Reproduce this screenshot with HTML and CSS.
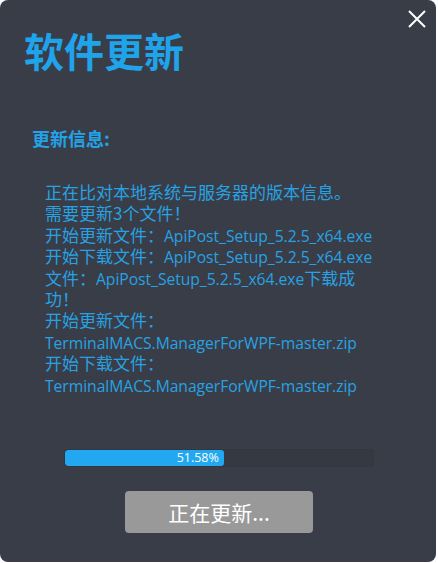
FILE: index.html
```html
<!DOCTYPE html>
<html lang="zh-CN">
<head>
<meta charset="utf-8">
<link rel="stylesheet" href="styles.css">
</head>
<body>
<div class="window">
  <button class="close" aria-label="关闭">
    <svg width="20" height="20" viewBox="0 0 20 20"><path d="M2 2 L18 18 M18 2 L2 18" stroke="#ffffff" stroke-width="2" fill="none"/></svg>
  </button>
  <h1 class="title">软件更新</h1>
  <h2 class="subtitle">更新信息:</h2>
  <div class="log">
    <div class="line">正在比对本地系统与服务器的版本信息。</div>
    <div class="line">需要更新3个文件！</div>
    <div class="line">开始更新文件：<span class="lat">ApiPost_Setup_5.2.5_x64.exe</span></div>
    <div class="line">开始下载文件：<span class="lat">ApiPost_Setup_5.2.5_x64.exe</span></div>
    <div class="line">文件：<span class="lat">ApiPost_Setup_5.2.5_x64.exe</span>下载成</div>
    <div class="line">功！</div>
    <div class="line">开始更新文件：</div>
    <div class="line"><span class="lat">TerminalMACS.ManagerForWPF-master.zip</span></div>
    <div class="line">开始下载文件：</div>
    <div class="line"><span class="lat">TerminalMACS.ManagerForWPF-master.zip</span></div>
  </div>
  <div class="progress">
    <div class="fill" style="width: 51.58%"><span class="pct">51.58%</span></div>
  </div>
  <div class="actions">
    <button class="update-btn">正在更新...</button>
  </div>
</div>
</body>
</html>
```
FILE: styles.css
```css
html, body {
  margin: 0;
  padding: 0;
  background: #ffffff;
}
body {
  font-family: "Noto Sans", "Noto Sans CJK SC", sans-serif;
}
.window {
  position: relative;
  width: 436px;
  height: 562px;
  background: #393d47;
  border-radius: 8px;
  overflow: hidden;
  display: flex;
  flex-direction: column;
}
.close {
  position: absolute;
  top: 8px;
  right: 8px;
  width: 22px;
  height: 22px;
  padding: 1px;
  border: 0;
  background: transparent;
  display: flex;
  align-items: center;
  justify-content: center;
}
.title {
  margin: 27px 0 0 24px;
  font-family: "Noto Sans CJK SC", sans-serif;
  font-size: 40px;
  line-height: 46px;
  font-weight: 700;
  color: #1fa3ea;
}
.subtitle {
  margin: 53px 0 0 32px;
  font-family: "Noto Sans CJK SC", sans-serif;
  font-size: 18px;
  line-height: 24px;
  font-weight: 700;
  color: #23a2e8;
}
.log {
  margin: 31px 0 0 45px;
  font-family: "Noto Sans CJK SC", sans-serif;
  font-size: 17px;
  line-height: 21.4px;
  color: #27a2e4;
}
.line {
  height: 21.4px;
  line-height: 21.4px;
  white-space: nowrap;
}
.lat {
  font-family: "Open Sans", "Noto Sans", sans-serif;
  font-size: 15.7px;
  line-height: 1;
  letter-spacing: -0.05px;
}
.progress {
  margin: 54px 0 0 64px;
  width: 310px;
  height: 18px;
  box-sizing: border-box;
  background: #353942;
  border: 1px solid #33373f;
  border-radius: 4px;
  overflow: hidden;
}
.fill {
  height: 100%;
  background: #22a8f0;
  border-radius: 3px;
  display: flex;
  justify-content: flex-end;
  align-items: center;
}
.pct {
  font-family: "Open Sans", "Noto Sans", sans-serif;
  font-size: 12.5px;
  color: #ffffff;
  padding-right: 5px;
  line-height: 16px;
}
.actions {
  margin: 24px 0 0 125px;
}
.update-btn {
  width: 188px;
  height: 42px;
  border: 0;
  border-radius: 4px;
  background: #999999;
  color: #ffffff;
  font-family: "Noto Sans CJK SC", sans-serif;
  font-size: 21px;
  padding: 0;
}
```
